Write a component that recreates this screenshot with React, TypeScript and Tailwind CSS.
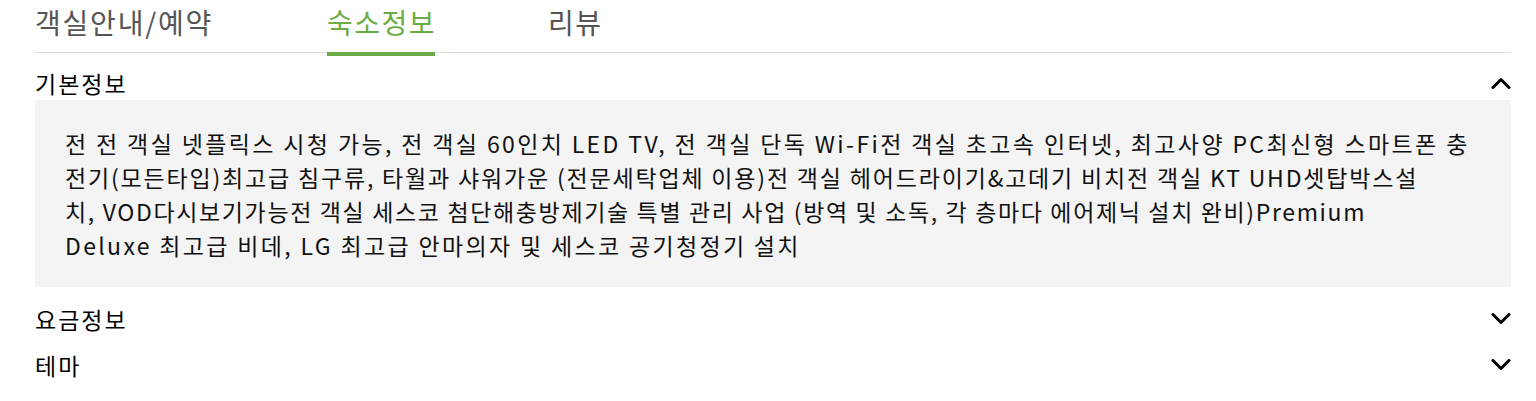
import React from "react";

const font = { fontFamily: '"Noto Sans CJK KR", "Noto Sans", sans-serif' };

function Chevron({ up }: { up?: boolean }) {
  return (
    <svg width="20" height="12" viewBox="0 0 20 12" fill="none">
      <polyline
        points={up ? "2,10.5 10,2.5 18,10.5" : "2,1.5 10,9.5 18,1.5"}
        stroke="#000"
        strokeWidth="3"
        strokeLinecap="round"
        strokeLinejoin="round"
      />
    </svg>
  );
}

const lines = [
  {
    t: "전 전 객실 넷플릭스 시청 가능, 전 객실 60인치 LED TV, 전 객실 단독 Wi-Fi전 객실 초고속 인터넷, 최고사양 PC최신형 스마트폰 충",
    c: "tracking-[2.37px]",
  },
  {
    t: "전기(모든타입)최고급 침구류, 타월과 샤워가운 (전문세탁업체 이용)전 객실 헤어드라이기&고데기 비치전 객실 KT UHD셋탑박스설",
    c: "tracking-[1.82px]",
  },
  {
    t: "치, VOD다시보기가능전 객실 세스코 첨단해충방제기술 특별 관리 사업 (방역 및 소독, 각 층마다 에어제닉 설치 완비)Premium",
    c: "tracking-[1.64px]",
  },
  {
    t: "Deluxe 최고급 비데, LG 최고급 안마의자 및 세스코 공기청정기 설치",
    c: "tracking-[2.34px]",
  },
];

export default function App() {
  return (
    <div className="bg-white w-[1536px] h-[401px] overflow-hidden" style={font}>
      <div className="ml-[35px] w-[1476px]">
        <div className="flex h-[52px] border-b border-[#dddddd] box-content">
          <div className="w-[292px]">
            <span className="text-[28px] leading-[44px] text-[#555555] tracking-[1.8px]">객실안내/예약</span>
          </div>
          <div className="w-[221px]">
            <span className="relative inline-block text-[28px] leading-[44px] text-[#6cac44] tracking-[1.5px]">
              숙소정보
              <span className="absolute left-0 right-[1px] top-[52px] h-[4px] bg-[#6cac44]" />
            </span>
          </div>
          <div>
            <span className="text-[28px] leading-[44px] text-[#555555] tracking-[1.5px]">리뷰</span>
          </div>
        </div>

        <div className="mt-[14px] flex h-[32px] items-center justify-between">
          <span className="text-[23px] text-black tracking-[2px]">기본정보</span>
          <Chevron up />
        </div>
        <div className="mt-[1px] bg-[#f4f4f4] h-[187px] pl-[30px] pt-[26px]">
          {lines.map((l, i) => (
            <div key={i} className={`text-[23px] leading-[34px] text-[#111111] whitespace-nowrap ${l.c}`}>
              {l.t}
            </div>
          ))}
        </div>

        <div className="mt-[16px] flex h-[32px] items-center justify-between">
          <span className="text-[23px] text-black tracking-[2px]">요금정보</span>
          <Chevron />
        </div>
        <div className="mt-[14px] flex h-[32px] items-center justify-between">
          <span className="text-[23px] text-black tracking-[2px]">테마</span>
          <Chevron />
        </div>
      </div>
    </div>
  );
}
